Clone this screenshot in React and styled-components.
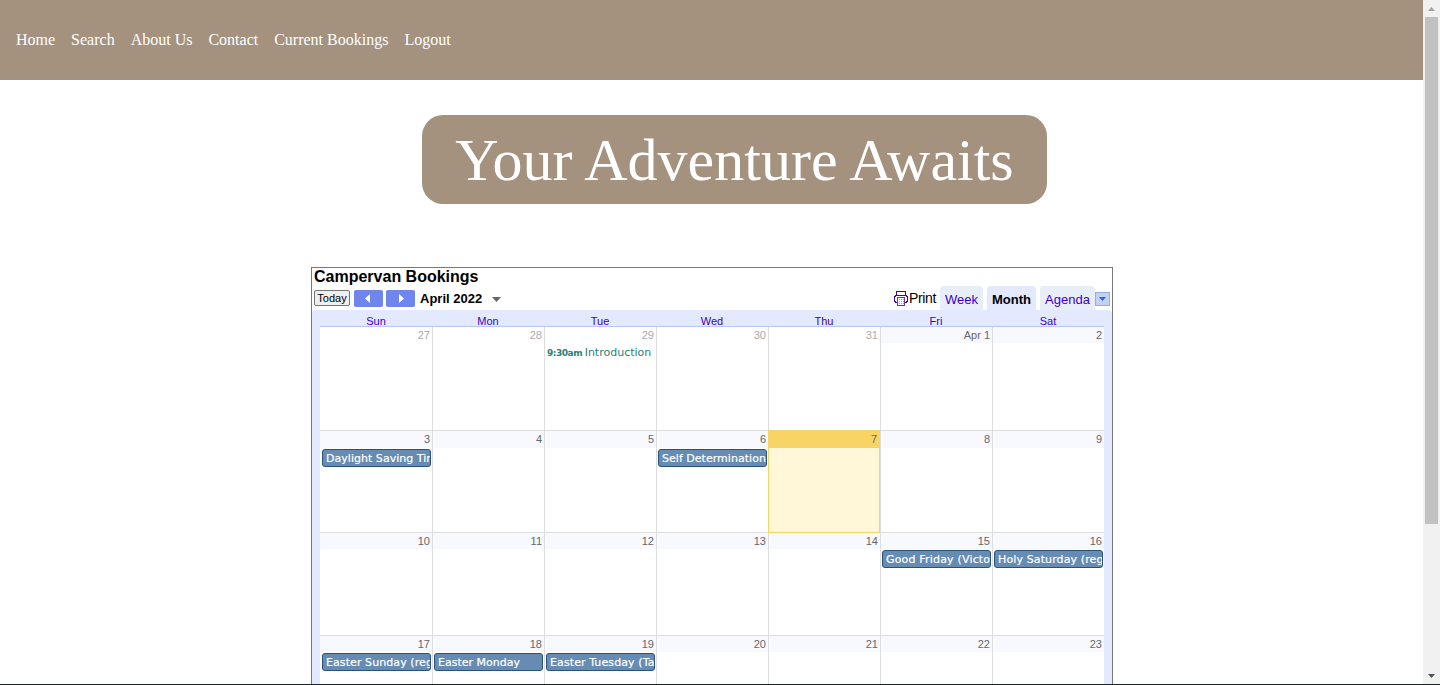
import React from "react";
import styled, { createGlobalStyle } from "styled-components";

const GlobalStyle = createGlobalStyle`
  * { box-sizing: border-box; }
  html, body { margin: 0; height: 100%; overflow: hidden; background: #fff; }
`;

const serif = `"Liberation Serif", "Times New Roman", serif`;
const sans = `"Liberation Sans", Arial, sans-serif`;
const verdana = `Verdana, "DejaVu Sans", sans-serif`;

const Window = styled.div`
  display: flex;
  width: 1440px;
  height: 685px;
  overflow: hidden;
  border-bottom: 1px solid #1b2226;
`;

const Page = styled.div`
  flex: 1;
  min-width: 0;
  overflow: hidden;
`;

const NavBar = styled.nav`
  display: flex;
  gap: 16px;
  height: 80px;
  padding: 31px 16px 0;
  background: #a4927f;
  font: 16px/18px ${serif};
`;

const NavLink = styled.a`
  color: #fff;
  white-space: nowrap;
`;

const Banner = styled.h1`
  display: flex;
  justify-content: center;
  width: 625px;
  height: 89px;
  margin: 35px 0 0 422px;
  border-radius: 21px;
  background: #a4927f;
  color: #fff;
  font: 400 60px/90px ${serif};
  white-space: nowrap;
`;

const Calendar = styled.section`
  width: 802px;
  height: 600px;
  margin: 63px 0 0 311px;
  border: 1px solid #777;
  background: #fff;
  font-family: ${sans};
`;

const CalendarTitle = styled.h2`
  height: 18px;
  margin: 0;
  padding-left: 2px;
  font-size: 16px;
  line-height: 18px;
  color: #000;
`;

const Toolbar = styled.div`
  display: flex;
  justify-content: space-between;
  height: 24px;
  padding: 0 2px;
`;

const DateControls = styled.div`
  display: flex;
  padding-top: 4px;
`;

const TodayButton = styled.button`
  width: 36px;
  height: 16px;
  margin: 0 4px 0 0;
  padding: 0;
  border: 1px solid #767676;
  border-radius: 2px;
  background: #efefef;
  color: #000;
  font: 11px/13px ${sans};
`;

const StepButton = styled.button`
  display: flex;
  align-items: center;
  justify-content: center;
  width: 29px;
  height: 17px;
  margin: 0 3px 0 0;
  padding: 0 2px 0 0;
  border: 0;
  border-radius: 2px;
  background: #6f86ec;
  &:nth-of-type(3) { padding: 0 0 0 2px; }
`;

const Period = styled.span`
  margin-left: 2px;
  color: #000;
  font-size: 13px;
  font-weight: 700;
  line-height: 17px;
`;

const PeriodArrow = styled.svg`
  margin: 7px 0 0 10px;
`;

const ViewControls = styled.div`
  display: flex;
  align-items: flex-end;
`;

const Print = styled.div`
  display: flex;
  height: 24px;
  margin-right: 4px;
  color: #000;
  font-size: 14px;
  letter-spacing: -0.35px;
  line-height: 25px;
  svg { margin: 5px 1px 0 0; }
`;

const Tab = styled.div`
  width: ${(p) => p.$width}px;
  height: 24px;
  margin-right: ${(p) => (p.$last ? 0 : 4)}px;
  border-radius: 4px 4px 0 0;
  background: ${(p) => (p.$active ? "#e3e9ff" : "#e8eef7")};
  color: ${(p) => (p.$active ? "#000" : "#3b00c4")};
  font-size: 13px;
  font-weight: ${(p) => (p.$active ? 700 : 400)};
  line-height: 27px;
  text-align: center;
`;

const TabMenu = styled.button`
  display: flex;
  align-items: center;
  justify-content: center;
  width: 15px;
  height: 14px;
  margin: 0 0 4px;
  padding: 0;
  border: 1px solid #92aee6;
  background: #c3d2f2;
`;

const MonthPanel = styled.div`
  height: 560px;
  padding: 0 7px 0 8px;
  border-radius: 4px 4px 0 0;
  background: #e3e9ff;
`;

const WeekdayRow = styled.div`
  display: grid;
  grid-template-columns: repeat(7, 112px);
  height: 17px;
  width: 784px;
  border-bottom: 1px solid #b8c6ff;
  color: #3b00c4;
  font-size: 11px;
  line-height: 22px;
  text-align: center;
`;

const Week = styled.div`
  display: grid;
  grid-template-columns: repeat(7, 112px);
  width: 784px;
  height: ${(p) => p.$height}px;
  background: #fff;
`;

const edge = (p) => (p.$today ? "#f8d466" : "#ddd");

const Day = styled.div`
  min-width: 0;
  border-left: ${(p) => (p.$firstColumn ? "0" : `1px solid ${edge(p)}`)};
  border-top: ${(p) => (p.$firstWeek ? "0" : `1px solid ${edge(p)}`)};
  background: ${(p) => (p.$today ? "#fff7d7" : "#fff")};
  box-shadow: ${(p) => (p.$today ? "inset -1px 0 #f8d466, 0 1px #f8d466" : "none")};
  position: ${(p) => (p.$today ? "relative" : "static")};
`;

const DayNumber = styled.div`
  height: ${(p) => p.$height}px;
  padding-right: ${(p) => (p.$today ? 3 : 2)}px;
  background: ${(p) => (p.$today ? "#f8d466" : p.$muted ? "#fff" : "#f8f9ff")};
  color: ${(p) => (p.$muted ? "#aaa" : "#666")};
  font-size: 11px;
  line-height: 17px;
  text-align: right;
`;

const EventChip = styled.div`
  width: 109px;
  height: 18px;
  margin: 1px 0 0 ${(p) => (p.$firstColumn ? 2 : 1)}px;
  padding-left: 3px;
  overflow: hidden;
  border: 1px solid #29527a;
  border-radius: 3px;
  background: #668cb3;
  color: #fff;
  font: 11px/17px ${verdana};
  letter-spacing: ${(p) => p.$spacing}px;
  -webkit-text-stroke: 0.2px #fff;
  white-space: nowrap;
`;

const TimedEvent = styled.div`
  padding: 1px 0 0 2px;
  color: #2a8078;
  font: 11px/17px ${verdana};
  white-space: nowrap;
`;

const EventTime = styled.b`
  margin-right: -1px;
  font: 700 9px/17px ${verdana};
  letter-spacing: -0.45px;
`;

const Scrollbar = styled.div`
  display: flex;
  flex-direction: column;
  align-items: center;
  width: 17px;
  background: #f1f1f1;
`;

const ScrollArrow = styled.div`
  display: flex;
  align-items: center;
  justify-content: center;
  width: 17px;
  height: 17px;
`;

const Thumb = styled.div`
  width: 13px;
  height: 507px;
  margin-bottom: auto;
  background: #c1c1c1;
`;

const PrinterIcon = () => (
  <svg width="14" height="15" viewBox="0 0 14 15" fill="none" stroke="#3b00c4" shapeRendering="crispEdges">
    <path d="M2.500 4V.5h9V4" />
    <path d="M3 11.500H1.500v-1h-1v-5h1v-1h11v1h1v5h-1v1H11" />
    <path d="M3.500 14.500v-8h7v8z" stroke="#5a35d0" />
    <path d="M5 8.500h1M7 8.500h1M9 8.500h1M5 10.500h1M7 10.500h1M9 10.500h1M5 12.500h1M7 12.500h1M9 12.500h1" strokeOpacity=".45" />
  </svg>
);

const navItems = ["Home", "Search", "About Us", "Contact", "Current Bookings", "Logout"];
const weekdays = ["Sun", "Mon", "Tue", "Wed", "Thu", "Fri", "Sat"];
const weeks = [
  { height: 103, head: 16, days: ["27", "28", "29", "30", "31", "Apr 1", "2"], events: {} },
  { height: 102, head: 17, days: ["3", "4", "5", "6", "7", "8", "9"], events: { 0: ["Daylight Saving Tim", 0.03], 3: ["Self Determination", 0.03] } },
  { height: 103, head: 16, days: ["10", "11", "12", "13", "14", "15", "16"], events: { 5: ["Good Friday (Victo", 0.18], 6: ["Holy Saturday (reg", 0.12] } },
  { height: 103, head: 16, days: ["17", "18", "19", "20", "21", "22", "23"], events: { 0: ["Easter Sunday (reg", 0.08], 1: ["Easter Monday", 0], 2: ["Easter Tuesday (Ta", 0.1] } },
];

export default function App() {
  return (
    <>
      <GlobalStyle />
      <Window>
        <Page>
          <NavBar>
            {navItems.map((item) => (
              <NavLink key={item}>{item}</NavLink>
            ))}
          </NavBar>
          <Banner>Your Adventure Awaits</Banner>
          <Calendar>
            <CalendarTitle>Campervan Bookings</CalendarTitle>
            <Toolbar>
              <DateControls>
                <TodayButton>Today</TodayButton>
                <StepButton aria-label="Previous">
                  <svg width="5" height="9" viewBox="0 0 5 9"><path d="M5 0v9L0 4.500z" fill="#fff" /></svg>
                </StepButton>
                <StepButton aria-label="Next">
                  <svg width="5" height="9" viewBox="0 0 5 9"><path d="M0 0v9l5-4.500z" fill="#fff" /></svg>
                </StepButton>
                <Period>April 2022</Period>
                <PeriodArrow width="9" height="5" viewBox="0 0 9 5"><path d="M0 0h9L4.500 5z" fill="#666" /></PeriodArrow>
              </DateControls>
              <ViewControls>
                <Print><PrinterIcon />Print</Print>
                <Tab $width={43}>Week</Tab>
                <Tab $width={49} $active>Month</Tab>
                <Tab $width={55} $last>Agenda</Tab>
                <TabMenu aria-label="More views">
                  <svg width="7" height="4" viewBox="0 0 7 4"><path d="M0 0h7L3.500 4z" fill="#3366cc" /></svg>
                </TabMenu>
              </ViewControls>
            </Toolbar>
            <MonthPanel>
              <WeekdayRow>
                {weekdays.map((day) => (
                  <span key={day}>{day}</span>
                ))}
              </WeekdayRow>
              {weeks.map((week, w) => (
                <Week key={w} $height={week.height}>
                  {week.days.map((day, d) => {
                    const today = w === 1 && d === 4;
                    return (
                      <Day key={day} $firstWeek={w === 0} $firstColumn={d === 0} $today={today}>
                        <DayNumber $height={week.head} $today={today} $muted={w === 0 && d < 5}>{day}</DayNumber>
                        {week.events[d] && (
                          <EventChip $firstColumn={d === 0} $spacing={week.events[d][1]}>{week.events[d][0]}</EventChip>
                        )}
                        {w === 0 && d === 2 && (
                          <TimedEvent><EventTime>9:30am</EventTime> Introduction</TimedEvent>
                        )}
                      </Day>
                    );
                  })}
                </Week>
              ))}
            </MonthPanel>
          </Calendar>
        </Page>
        <Scrollbar>
          <ScrollArrow>
            <svg width="7" height="4" viewBox="0 0 7 4"><path d="M0 4h7L3.500 0z" fill="#a3a3a3" /></svg>
          </ScrollArrow>
          <Thumb />
          <ScrollArrow>
            <svg width="7" height="4" viewBox="0 0 7 4"><path d="M0 0h7L3.500 4z" fill="#505050" /></svg>
          </ScrollArrow>
        </Scrollbar>
      </Window>
    </>
  );
}
